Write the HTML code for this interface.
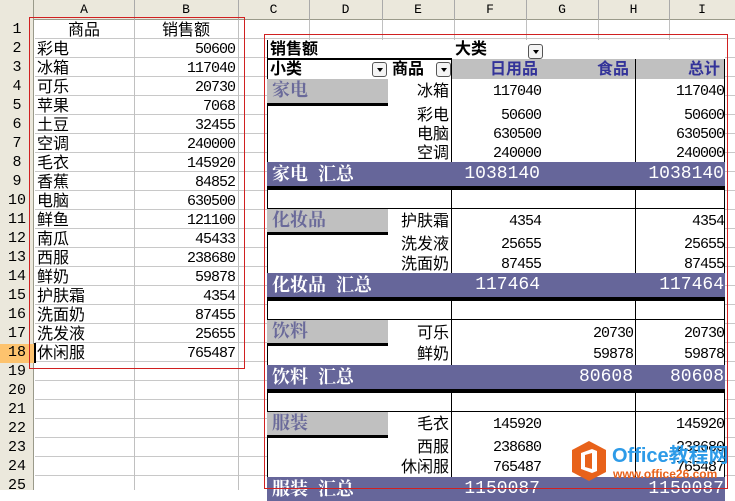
<!DOCTYPE html>
<html><head><meta charset="utf-8"><style>
*{margin:0;padding:0;box-sizing:border-box}
body{width:735px;height:490px;overflow:hidden;background:#fff;position:relative;font-family:"Liberation Sans","Noto Sans CJK SC",sans-serif}
.a{position:absolute;white-space:nowrap}
.cj{font-family:"Liberation Sans","Noto Sans CJK SC",sans-serif;font-size:16px;line-height:19px;color:#000}
.n{font-family:"Liberation Mono",monospace;font-size:15px;letter-spacing:-1px;line-height:19px;text-align:right;color:#000;padding-right:0}
.hl{background:#c0c0c0;height:1px}
.vl{background:#c0c0c0;width:1px}
.ch{font-family:"Liberation Mono",monospace;font-size:13px;color:#000;text-align:center;line-height:20px;top:0}
.rh{font-family:"Liberation Mono",monospace;font-size:15px;color:#000;text-align:center;width:34px;left:0;line-height:19px}
.bk{background:#000}
.gb{background:#c0c0c0;color:#6a6a9a;font-weight:bold;font-size:18px;line-height:23px;padding-left:5px;font-family:"Liberation Sans","Noto Serif CJK SC",serif}
.band{background:#66669a;color:#fff;left:267px;width:458px;height:24px}
.bt{color:#fff;font-weight:bold;font-size:18px;line-height:24px;font-family:"Liberation Sans","Noto Serif CJK SC",serif}
.bn{color:#fff;font-family:"Liberation Mono",monospace;font-size:18px;line-height:24px;text-align:right}
.dd{width:15px;height:15px;border:1px solid #555;border-radius:3px;background:#f4f4f4}
.dd:after{content:"";position:absolute;left:4px;top:5px;border-left:3px solid transparent;border-right:3px solid transparent;border-top:4px solid #000}
</style></head><body>
<div class="a" style="left:0;top:0;width:735px;height:20px;background:#ebe8dc;border-bottom:1px solid #9a9a8a"></div>
<div class="a" style="left:0;top:0;width:34px;height:490px;background:#ebe8dc;border-right:1px solid #9a9a8a"></div>
<div class="a" style="left:0;top:344px;width:34px;height:19px;background:#fdc36e"></div>
<div class="a ch" style="left:34px;width:100px">A</div>
<div class="a ch" style="left:134px;width:104px">B</div>
<div class="a ch" style="left:238px;width:71px">C</div>
<div class="a ch" style="left:309px;width:73px">D</div>
<div class="a ch" style="left:382px;width:72px">E</div>
<div class="a ch" style="left:454px;width:72px">F</div>
<div class="a ch" style="left:526px;width:72px">G</div>
<div class="a ch" style="left:598px;width:71px">H</div>
<div class="a ch" style="left:669px;width:66px">I</div>
<div class="a" style="left:134px;top:0;width:1px;height:20px;background:#aaa"></div>
<div class="a" style="left:238px;top:0;width:1px;height:20px;background:#aaa"></div>
<div class="a" style="left:309px;top:0;width:1px;height:20px;background:#aaa"></div>
<div class="a" style="left:382px;top:0;width:1px;height:20px;background:#aaa"></div>
<div class="a" style="left:454px;top:0;width:1px;height:20px;background:#aaa"></div>
<div class="a" style="left:526px;top:0;width:1px;height:20px;background:#aaa"></div>
<div class="a" style="left:598px;top:0;width:1px;height:20px;background:#aaa"></div>
<div class="a" style="left:669px;top:0;width:1px;height:20px;background:#aaa"></div>
<div class="a" style="left:35px;top:20px;width:700px;height:470px;background:repeating-linear-gradient(to bottom,transparent 0,transparent 18px,#c8c8c8 18px,#c8c8c8 19px)"></div>
<div class="a vl" style="left:134px;top:20px;height:470px"></div>
<div class="a vl" style="left:238px;top:20px;height:470px"></div>
<div class="a vl" style="left:309px;top:20px;height:470px"></div>
<div class="a vl" style="left:382px;top:20px;height:470px"></div>
<div class="a vl" style="left:454px;top:20px;height:470px"></div>
<div class="a vl" style="left:526px;top:20px;height:470px"></div>
<div class="a vl" style="left:598px;top:20px;height:470px"></div>
<div class="a vl" style="left:669px;top:20px;height:470px"></div>
<div class="a rh" style="top:20px">1</div><div class="a rh" style="top:39px">2</div><div class="a rh" style="top:58px">3</div><div class="a rh" style="top:77px">4</div><div class="a rh" style="top:96px">5</div><div class="a rh" style="top:115px">6</div><div class="a rh" style="top:134px">7</div><div class="a rh" style="top:153px">8</div><div class="a rh" style="top:172px">9</div><div class="a rh" style="top:191px">10</div><div class="a rh" style="top:210px">11</div><div class="a rh" style="top:229px">12</div><div class="a rh" style="top:248px">13</div><div class="a rh" style="top:267px">14</div><div class="a rh" style="top:286px">15</div><div class="a rh" style="top:305px">16</div><div class="a rh" style="top:324px">17</div><div class="a rh" style="top:343px">18</div><div class="a rh" style="top:362px">19</div><div class="a rh" style="top:381px">20</div><div class="a rh" style="top:400px">21</div><div class="a rh" style="top:419px">22</div><div class="a rh" style="top:438px">23</div><div class="a rh" style="top:457px">24</div><div class="a rh" style="top:476px">25</div>
<div class="a cj" style="left:34px;width:100px;text-align:center;top:21px">商品</div>
<div class="a cj" style="left:134px;width:104px;text-align:center;top:21px">销售额</div>
<div class="a cj" style="left:37px;top:40px">彩电</div><div class="a n" style="left:134px;width:101px;top:40px">50600</div>
<div class="a cj" style="left:37px;top:59px">冰箱</div><div class="a n" style="left:134px;width:101px;top:59px">117040</div>
<div class="a cj" style="left:37px;top:78px">可乐</div><div class="a n" style="left:134px;width:101px;top:78px">20730</div>
<div class="a cj" style="left:37px;top:97px">苹果</div><div class="a n" style="left:134px;width:101px;top:97px">7068</div>
<div class="a cj" style="left:37px;top:116px">土豆</div><div class="a n" style="left:134px;width:101px;top:116px">32455</div>
<div class="a cj" style="left:37px;top:135px">空调</div><div class="a n" style="left:134px;width:101px;top:135px">240000</div>
<div class="a cj" style="left:37px;top:154px">毛衣</div><div class="a n" style="left:134px;width:101px;top:154px">145920</div>
<div class="a cj" style="left:37px;top:173px">香蕉</div><div class="a n" style="left:134px;width:101px;top:173px">84852</div>
<div class="a cj" style="left:37px;top:192px">电脑</div><div class="a n" style="left:134px;width:101px;top:192px">630500</div>
<div class="a cj" style="left:37px;top:211px">鲜鱼</div><div class="a n" style="left:134px;width:101px;top:211px">121100</div>
<div class="a cj" style="left:37px;top:230px">南瓜</div><div class="a n" style="left:134px;width:101px;top:230px">45433</div>
<div class="a cj" style="left:37px;top:249px">西服</div><div class="a n" style="left:134px;width:101px;top:249px">238680</div>
<div class="a cj" style="left:37px;top:268px">鲜奶</div><div class="a n" style="left:134px;width:101px;top:268px">59878</div>
<div class="a cj" style="left:37px;top:287px">护肤霜</div><div class="a n" style="left:134px;width:101px;top:287px">4354</div>
<div class="a cj" style="left:37px;top:306px">洗面奶</div><div class="a n" style="left:134px;width:101px;top:306px">87455</div>
<div class="a cj" style="left:37px;top:325px">洗发液</div><div class="a n" style="left:134px;width:101px;top:325px">25655</div>
<div class="a cj" style="left:37px;top:344px">休闲服</div><div class="a n" style="left:134px;width:101px;top:344px">765487</div>
<div class="a" style="left:34px;top:343px;width:2px;height:20px;background:#000"></div>
<div class="a" style="left:29px;top:17px;width:216px;height:352px;border:1px solid #d02020"></div>
<div class="a" style="left:267px;top:40px;width:458px;height:450px;background:#fff"></div>
<div class="a cj" style="left:270px;top:40px;font-weight:bold">销售额</div>
<div class="a cj" style="left:455px;top:40px;font-weight:bold">大类</div>
<div class="a dd" style="left:528px;top:44px"></div>
<div class="a bk" style="left:267px;top:58px;width:185px;height:2px"></div>
<div class="a" style="left:452px;top:59px;width:273px;height:20px;background:#c0c0c0"></div>
<div class="a cj" style="left:270px;top:60px;font-weight:bold">小类</div>
<div class="a dd" style="left:372px;top:62px"></div>
<div class="a cj" style="left:392px;top:60px;font-weight:bold">商品</div>
<div class="a dd" style="left:436px;top:62px"></div>
<div class="a cj" style="left:490px;top:60px;font-weight:bold;color:#333399">日用品</div>
<div class="a cj" style="left:597px;top:60px;font-weight:bold;color:#333399">食品</div>
<div class="a cj" style="left:688px;top:60px;font-weight:bold;color:#333399">总计</div>
<div class="a bk" style="left:267px;top:40px;width:1px;height:450px"></div>
<div class="a bk" style="left:451px;top:59px;width:1px;height:431px"></div>
<div class="a bk" style="left:635px;top:59px;width:1px;height:431px"></div>
<div class="a bk" style="left:724px;top:59px;width:1px;height:431px"></div>
<div class="a gb" style="left:267px;top:79px;width:121px;height:24px">家电</div>
<div class="a bk" style="left:267px;top:103px;width:121px;height:3px"></div>
<div class="a cj" style="left:388px;width:61px;text-align:right;top:82px">冰箱</div><div class="a n" style="left:452px;width:89px;top:82px">117040</div><div class="a n" style="left:636px;width:88px;top:82px">117040</div>
<div class="a cj" style="left:388px;width:61px;text-align:right;top:106px">彩电</div><div class="a n" style="left:452px;width:89px;top:106px">50600</div><div class="a n" style="left:636px;width:88px;top:106px">50600</div>
<div class="a cj" style="left:388px;width:61px;text-align:right;top:125px">电脑</div><div class="a n" style="left:452px;width:89px;top:125px">630500</div><div class="a n" style="left:636px;width:88px;top:125px">630500</div>
<div class="a cj" style="left:388px;width:61px;text-align:right;top:144px">空调</div><div class="a n" style="left:452px;width:89px;top:144px">240000</div><div class="a n" style="left:636px;width:88px;top:144px">240000</div>
<div class="a band" style="top:162px"></div>
<div class="a bt" style="left:272px;top:162px">家电&nbsp;&nbsp;汇总</div>
<div class="a bn" style="left:452px;width:88px;top:162px">1038140</div><div class="a bn" style="left:636px;width:88px;top:162px">1038140</div>
<div class="a bk" style="left:267px;top:186px;width:458px;height:4px"></div>
<div class="a bk" style="left:267px;top:208px;width:458px;height:1px"></div>
<div class="a gb" style="left:267px;top:209px;width:121px;height:23px">化妆品</div>
<div class="a bk" style="left:267px;top:232px;width:121px;height:3px"></div>
<div class="a cj" style="left:388px;width:61px;text-align:right;top:212px">护肤霜</div><div class="a n" style="left:452px;width:89px;top:212px">4354</div><div class="a n" style="left:636px;width:88px;top:212px">4354</div>
<div class="a cj" style="left:388px;width:61px;text-align:right;top:235px">洗发液</div><div class="a n" style="left:452px;width:89px;top:235px">25655</div><div class="a n" style="left:636px;width:88px;top:235px">25655</div>
<div class="a cj" style="left:388px;width:61px;text-align:right;top:255px">洗面奶</div><div class="a n" style="left:452px;width:89px;top:255px">87455</div><div class="a n" style="left:636px;width:88px;top:255px">87455</div>
<div class="a band" style="top:273px"></div>
<div class="a bt" style="left:272px;top:273px">化妆品&nbsp;&nbsp;汇总</div>
<div class="a bn" style="left:452px;width:88px;top:273px">117464</div><div class="a bn" style="left:636px;width:88px;top:273px">117464</div>
<div class="a bk" style="left:267px;top:297px;width:458px;height:4px"></div>
<div class="a bk" style="left:267px;top:319px;width:458px;height:1px"></div>
<div class="a gb" style="left:267px;top:320px;width:121px;height:23px">饮料</div>
<div class="a bk" style="left:267px;top:343px;width:121px;height:3px"></div>
<div class="a cj" style="left:388px;width:61px;text-align:right;top:324px">可乐</div><div class="a n" style="left:545px;width:88px;top:324px">20730</div><div class="a n" style="left:636px;width:88px;top:324px">20730</div>
<div class="a cj" style="left:388px;width:61px;text-align:right;top:345px">鲜奶</div><div class="a n" style="left:545px;width:88px;top:345px">59878</div><div class="a n" style="left:636px;width:88px;top:345px">59878</div>
<div class="a band" style="top:365px"></div>
<div class="a bt" style="left:272px;top:365px">饮料&nbsp;&nbsp;汇总</div>
<div class="a bn" style="left:545px;width:88px;top:365px">80608</div><div class="a bn" style="left:636px;width:88px;top:365px">80608</div>
<div class="a bk" style="left:267px;top:389px;width:458px;height:4px"></div>
<div class="a bk" style="left:267px;top:411px;width:458px;height:1px"></div>
<div class="a gb" style="left:267px;top:412px;width:121px;height:23px">服装</div>
<div class="a bk" style="left:267px;top:435px;width:121px;height:3px"></div>
<div class="a cj" style="left:388px;width:61px;text-align:right;top:415px">毛衣</div><div class="a n" style="left:452px;width:89px;top:415px">145920</div><div class="a n" style="left:636px;width:88px;top:415px">145920</div>
<div class="a cj" style="left:388px;width:61px;text-align:right;top:438px">西服</div><div class="a n" style="left:452px;width:89px;top:438px">238680</div><div class="a n" style="left:636px;width:88px;top:438px">238680</div>
<div class="a cj" style="left:388px;width:61px;text-align:right;top:458px">休闲服</div><div class="a n" style="left:452px;width:89px;top:458px">765487</div><div class="a n" style="left:636px;width:88px;top:458px">765487</div>
<div class="a band" style="top:477px"></div>
<div class="a bt" style="left:272px;top:477px">服装&nbsp;&nbsp;汇总</div>
<div class="a bn" style="left:452px;width:88px;top:477px">1150087</div><div class="a bn" style="left:636px;width:88px;top:477px">1150087</div>
<div class="a" style="left:264px;top:34px;width:464px;height:455px;border:1px solid #d02020"></div>
<svg class="a" style="left:570px;top:440px" width="38" height="42" viewBox="0 0 38 42">
<polygon points="19,1 36,10 36,32 19,41 2,32 2,10" fill="#e8621a"/>
<path d="M11 13 L22 9 L27 11 L27 31 L22 33 L11 29 Z M15 15 L15 27 L22 29 L22 13 Z" fill="#fff" fill-rule="evenodd"/>
</svg>
<div class="a" style="left:612px;top:444px;font-size:20px;font-weight:bold;color:#2d9be8;line-height:24px;font-family:'Liberation Sans','Noto Sans CJK SC',sans-serif">Office教程网</div>
<div class="a" style="left:613px;top:468px;font-size:12px;font-weight:bold;color:#e8621a;line-height:12px">www.office26.com</div>
</body></html>
